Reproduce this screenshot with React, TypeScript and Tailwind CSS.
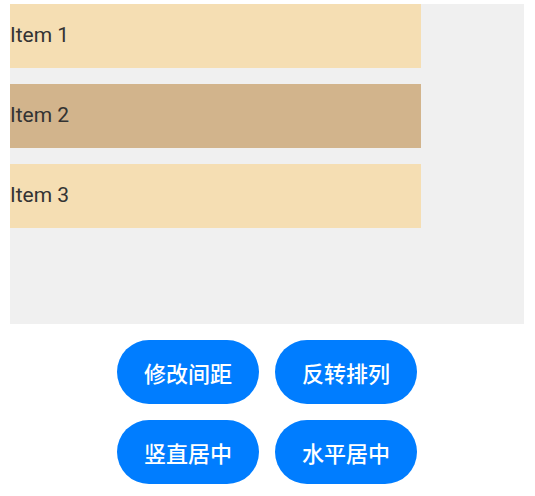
export default function App() {
  const items = ['Item 1', 'Item 2', 'Item 3'];
  const btn =
    "w-[142px] h-16 rounded-full bg-[#007dff] text-white text-[22px] font-medium font-['Noto_Sans_CJK_SC',sans-serif]";
  return (
    <div className="w-[535px] h-[496px] bg-white pt-[4px] font-['Roboto','Noto_Sans_CJK_SC',sans-serif]">
      <div className="ml-[10px] w-[514px] h-[320px] bg-[#f0f0f0] flex flex-col gap-4">
        {items.map((t, i) => (
          <div
            key={t}
            className={`w-[411px] h-16 flex items-center text-[21px] text-[#333333] ${i === 1 ? 'bg-[#d2b48c]' : 'bg-[#f5deb3]'}`}
          >
            {t}
          </div>
        ))}
      </div>
      <div className="mt-4 flex flex-col items-center gap-4 pr-px">
        <div className="flex gap-4">
          <button className={btn}>修改间距</button>
          <button className={btn}>反转排列</button>
        </div>
        <div className="flex gap-4">
          <button className={btn}>竖直居中</button>
          <button className={btn}>水平居中</button>
        </div>
      </div>
    </div>
  );
}
